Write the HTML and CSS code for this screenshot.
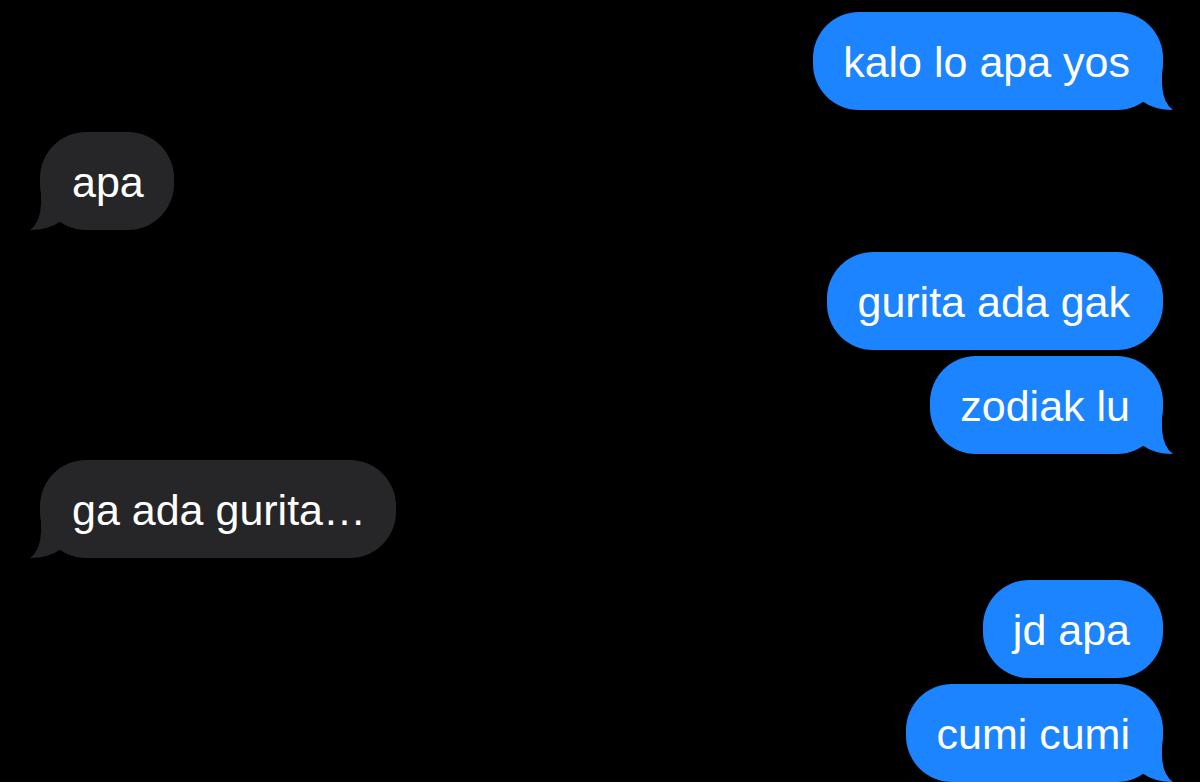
FILE: index.html
```html
<!DOCTYPE html>
<html lang="en">
<head>
    <meta charset="UTF-8">
    <meta name="viewport" content="width=device-width, initial-scale=1.0">
    <title>Messages</title>
    <link rel="stylesheet" href="styles.css">
</head>
<body>

<div class="chat">
    <div class="msg sent">
        <span class="text">kalo lo apa yos</span>
        <svg class="tail" width="53" height="45" viewBox="0 0 53 45"><path d="M0 44 Q16 43 22 36 Q34 45 53 45 Q43 38 42 20 L42 0 L0 0 Z"/></svg>
    </div>
    <div class="msg received spaced">
        <span class="text">apa</span>
        <svg class="tail" width="53" height="45" viewBox="0 0 53 45"><path d="M0 44 Q16 43 22 36 Q34 45 53 45 Q43 38 42 20 L42 0 L0 0 Z"/></svg>
    </div>
    <div class="msg sent spaced">
        <span class="text">gurita ada gak</span>
    </div>
    <div class="msg sent tight">
        <span class="text">zodiak lu</span>
        <svg class="tail" width="53" height="45" viewBox="0 0 53 45"><path d="M0 44 Q16 43 22 36 Q34 45 53 45 Q43 38 42 20 L42 0 L0 0 Z"/></svg>
    </div>
    <div class="msg received tight">
        <span class="text">ga ada gurita…</span>
        <svg class="tail" width="53" height="45" viewBox="0 0 53 45"><path d="M0 44 Q16 43 22 36 Q34 45 53 45 Q43 38 42 20 L42 0 L0 0 Z"/></svg>
    </div>
    <div class="msg sent spaced">
        <span class="text">jd apa</span>
    </div>
    <div class="msg sent tight">
        <span class="text">cumi cumi</span>
        <svg class="tail" width="53" height="45" viewBox="0 0 53 45"><path d="M0 44 Q16 43 22 36 Q34 45 53 45 Q43 38 42 20 L42 0 L0 0 Z"/></svg>
    </div>
</div>

</body>
</html>
```

FILE: styles.css
```css
body {
    margin: 0;
    background-color: #000;
    font-family: "Liberation Sans", Arial, sans-serif;
    color: #fff;
    overflow: hidden;
}
.chat {
    display: flex;
    flex-direction: column;
    padding: 12px 37px 0 40px;
    height: 782px;
    box-sizing: border-box;
}
.msg {
    position: relative;
    display: flex;
    align-items: center;
    height: 98px;
    box-sizing: border-box;
    border-radius: 46px;
    font-size: 43px;
    line-height: 1;
}
.msg .text {
    position: relative;
    z-index: 1;
    padding-top: 2px;
}
.sent {
    align-self: flex-end;
    background-color: #1b84fe;
    padding: 0 33px 0 30px;
}
.received {
    align-self: flex-start;
    background-color: #262628;
    padding: 0 30px 0 32px;
}
.spaced {
    margin-top: 22px;
}
.tight {
    margin-top: 6px;
}
.tail {
    position: absolute;
    bottom: 0;
    display: block;
}
.sent .tail {
    right: -10px;
    fill: #1b84fe;
}
.received .tail {
    left: -10px;
    fill: #262628;
    transform: scaleX(-1);
}
```
